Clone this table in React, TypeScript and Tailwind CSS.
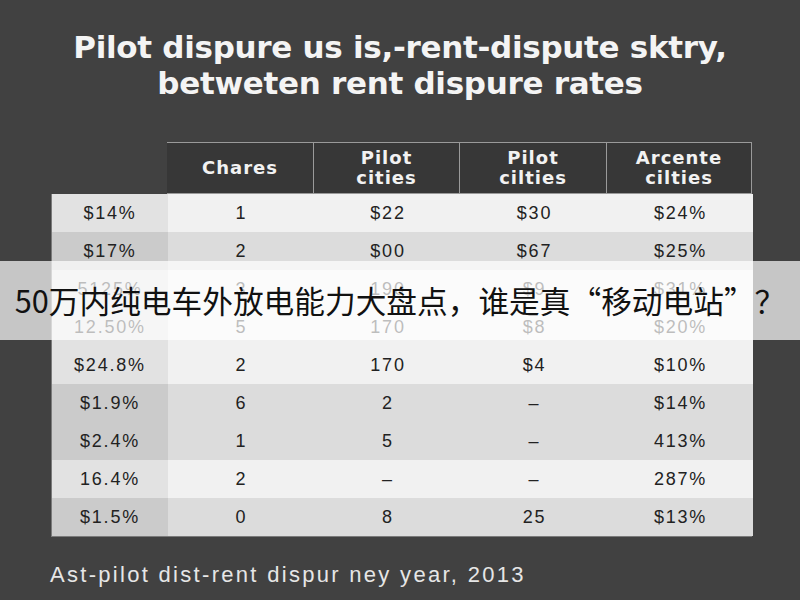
const headers = ["", "Chares", "Pilot\ncities", "Pilot\ncilties", "Arcente\ncilties"];

type Row = { cells: string[]; tone: "light" | "dark" };

const rows: Row[] = [
  { cells: ["$14%", "1", "$22", "$30", "$24%"], tone: "light" },
  { cells: ["$17%", "2", "$00", "$67", "$25%"], tone: "dark" },
  { cells: ["5125%", "3", "190", "$9", "$31%"], tone: "light" },
  { cells: ["12.50%", "5", "170", "$8", "$20%"], tone: "light" },
  { cells: ["$24.8%", "2", "170", "$4", "$10%"], tone: "light" },
  { cells: ["$1.9%", "6", "2", "–", "$14%"], tone: "dark" },
  { cells: ["$2.4%", "1", "5", "–", "413%"], tone: "dark" },
  { cells: ["16.4%", "2", "–", "–", "287%"], tone: "light" },
  { cells: ["$1.5%", "0", "8", "25", "$13%"], tone: "dark" },
];

const cols = "grid grid-cols-[116px_147px_146px_147px_145px]";

export default function App() {
  return (
    <div className="relative h-[600px] w-[800px] overflow-hidden bg-[#414141] font-['Liberation_Sans',Arial,sans-serif]">
      <div className="flex flex-col items-center pt-[29px] text-center font-['DejaVu_Sans','Liberation_Sans',sans-serif] text-[31px] font-bold leading-[36px] tracking-[-0.3px] text-[#f4f4f4]">
        <div>Pilot dispure us is,-rent-dispute sktry,</div>
        <div>betweten rent dispure rates</div>
      </div>

      <div className="ml-[51px] mt-[41px] w-[701px]">
        <div className={`${cols} h-[52px]`}>
          {headers.map((h, i) =>
            i === 0 ? (
              <div key={i} />
            ) : (
              <div
                key={i}
                className={`flex items-center justify-center whitespace-pre-line border border-l-0 border-[#9a9a9a] bg-[#373737] text-center font-['DejaVu_Sans',sans-serif] text-[18px] font-bold leading-[20px] tracking-[1px] text-[#f2f2f2] ${
                  i === 1 ? "border-l" : ""
                }`}
              >
                {h}
              </div>
            )
          )}
        </div>
        <div className="border border-t-0 border-[#7a7a7a]">
          {rows.map((r, ri) => (
            <div
              key={ri}
              className={`${cols} h-[38px] text-[18px] tracking-[1.8px] text-[#222]`}
            >
              {r.cells.map((c, ci) => (
                <div
                  key={ci}
                  className={`flex items-center justify-center ${
                    ci === 0
                      ? r.tone === "light"
                        ? "bg-[#e2e2e2]"
                        : "bg-[#cbcbcb]"
                      : r.tone === "light"
                      ? "bg-[#f1f1f1]"
                      : "bg-[#dcdcdc]"
                  }`}
                >
                  {c}
                </div>
              ))}
            </div>
          ))}
        </div>
      </div>

      <div className="ml-[50px] mt-[21px] text-[22px] tracking-[2.3px] text-[#e6e6e6]">
        Ast-pilot dist-rent dispur ney year, 2013
      </div>

      <div className="absolute left-0 top-[261px] flex h-[79px] w-[800px] items-center justify-center bg-white/70 font-['Noto_Sans_CJK_SC',sans-serif] text-[30.7px] text-[#111]">
        50万内纯电车外放电能力大盘点，谁是真“移动电站”？
      </div>
    </div>
  );
}
